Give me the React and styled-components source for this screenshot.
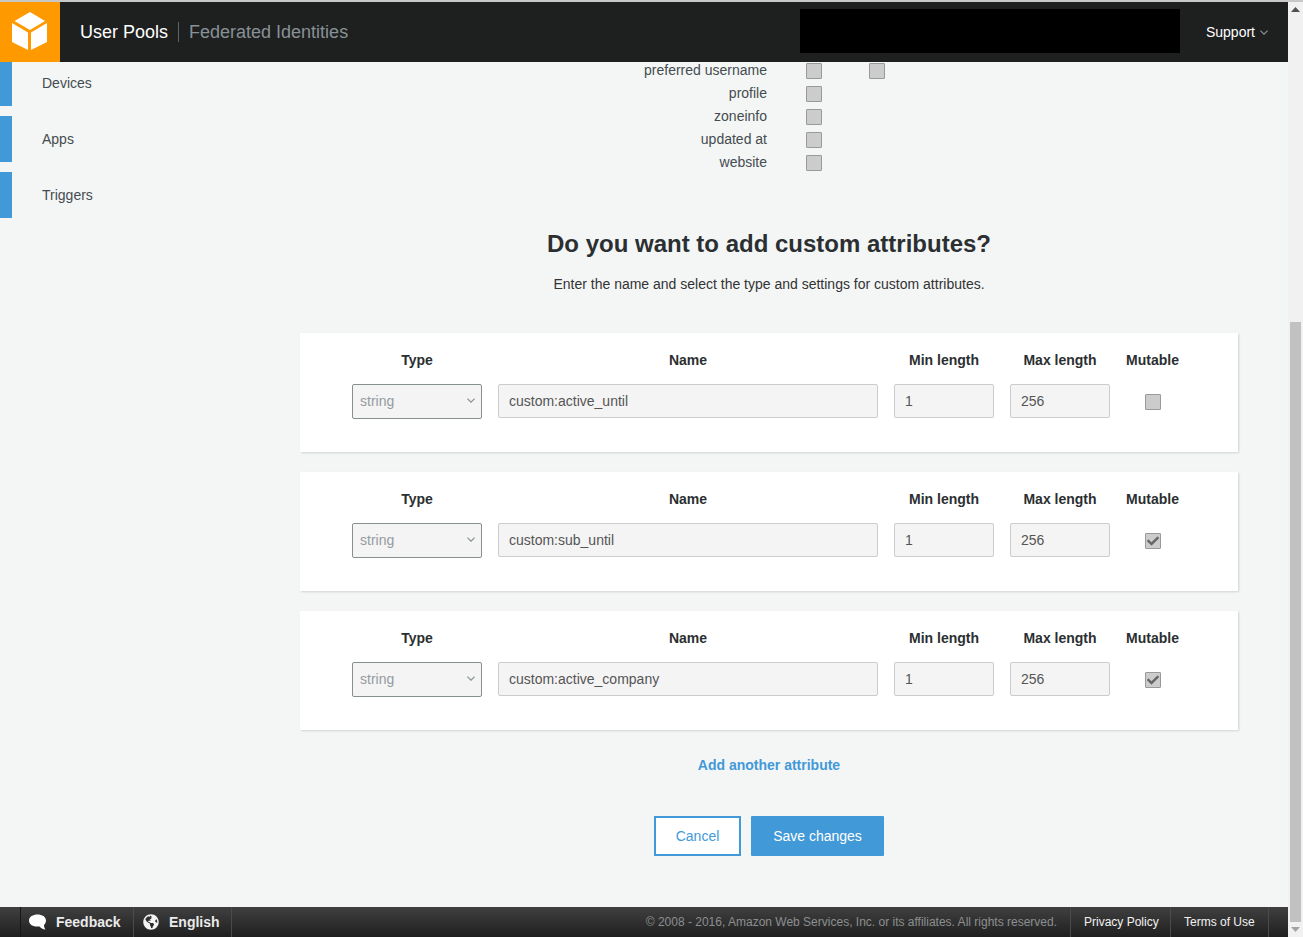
import React from "react";
import styled, { createGlobalStyle } from "styled-components";
import { FaCheck, FaGlobeAmericas } from "react-icons/fa";

const Global = createGlobalStyle`
  html, body { margin: 0; padding: 0; height: 100%; overflow: hidden; }
  body { font-family: "Liberation Sans", Arial, sans-serif; font-size: 14px; color: #333; background: #f4f6f6; }
  * { box-sizing: border-box; }
`;

const Page = styled.div`
  width: 1303px; height: 937px; display: flex; flex-direction: column;
  border-top: 2px solid #c8c8c8; background: #f4f6f6;
`;
const Body = styled.div`display: flex; height: 935px;`;
const Viewport = styled.div`width: 1288px; display: flex; flex-direction: column;`;

const Nav = styled.header`height: 60px; flex: none; background: #1e2020; display: flex; align-items: center;`;
const LogoBox = styled.div`width: 60px; height: 60px; background: #ff9900; display: flex; align-items: center; justify-content: center; margin-right: 20px; padding: 0 1px 2px 0;`;
const NavTab = styled.span`font-size: 18px; color: ${p => p.$dim ? "#879196" : "#fff"};`;
const NavDivider = styled.span`width: 1px; height: 20px; background: #5f6363; margin: 0 10px;`;
const Redacted = styled.div`width: 380px; height: 44px; background: #000; margin: 0 26px 2px auto;`;
const Support = styled.div`color: #fff; font-size: 14px; display: flex; align-items: center; gap: 5px; margin-right: 20px;`;

const Content = styled.div`flex: 1; min-height: 0; display: flex; overflow: hidden;`;
const Sidebar = styled.nav`width: 300px; flex: none; display: flex; flex-direction: column; gap: 10px; margin-top: -2px;`;
const SideItem = styled.div`height: 46px; flex: none; border-left: 12px solid #4299d8; padding-left: 30px; display: flex; align-items: center; color: #444c50; font-size: 14px;`;

const Main = styled.main`width: 938px; flex: none; display: flex; flex-direction: column; align-items: stretch;`;
const AttrList = styled.div`display: flex; flex-direction: column; margin-top: -3px;`;
const AttrRow = styled.div`height: 23px; display: flex; align-items: center;`;
const AttrLabel = styled.span`width: 467px; text-align: right; color: #444c50; font-size: 14px; margin: 0 39px 1px 0;`;
const Check = styled.span`
  width: 16px; height: 16px; flex: none; background: #cccccc; border: 1px solid #999; border-radius: 1px;
  display: inline-flex; align-items: center; justify-content: center;
  margin-right: ${p => p.$gap || 0}px;
  color: #666;
`;
const Title = styled.h2`margin: 56px 0 0; height: 28px; line-height: 28px; text-align: center; font-size: 24px; font-weight: 700; color: #2b2f31;`;
const Subtitle = styled.p`margin: 18px 0 0; height: 16px; line-height: 16px; text-align: center; color: #333; font-size: 14px;`;
const Cards = styled.div`margin-top: 41px; display: flex; flex-direction: column; gap: 20px;`;
const Card = styled.section`
  height: 119px; background: #fff; box-shadow: 1px 1px 2px rgba(0,0,0,.15);
  padding: 19px 0 0 52px;
  display: grid; grid-template-columns: 130px 380px 100px 100px 54px; column-gap: 16px;
  grid-template-rows: 16px 35px; row-gap: 16px; align-content: start; align-items: start;
`;
const ColHead = styled.div`font-weight: 700; font-size: 14px; line-height: 16px; text-align: center; color: #2b2f31; white-space: nowrap; padding-right: ${p => p.$nudge || 0}px;`;
const SelectBox = styled.div`
  height: 35px; background: #f4f4f4; border: 1px solid #888f90; border-radius: 2px; padding: 0 6px 2px 7px;
  display: flex; align-items: center; justify-content: space-between; color: #949b9f; font-size: 14px;
`;
const Field = styled.div`
  height: 34px; background: #f4f4f4; border: 1px solid #ccc; border-radius: 2px;
  padding-left: ${p => p.$pad || 10}px; display: flex; align-items: center; color: #555; font-size: 14px;
`;
const CheckCell = styled.div`height: 35px; display: flex; align-items: center; justify-content: center;`;
const AddLink = styled.a`margin-top: 27px; height: 16px; line-height: 16px; text-align: center; color: #4299d8; font-weight: 700; font-size: 14px;`;
const Actions = styled.div`margin-top: 43px; display: flex; justify-content: center; gap: 10px;`;
const CancelBtn = styled.button`width: 87px; height: 40px; background: #fff; border: 2px solid #4299d8; color: #4299d8; font: 14px "Liberation Sans", Arial, sans-serif; padding: 0;`;
const SaveBtn = styled.button`width: 133px; height: 40px; background: #4299d8; border: 0; border-radius: 1px; color: #fff; font: 14px "Liberation Sans", Arial, sans-serif; padding: 0;`;

const Footer = styled.footer`
  height: 30px; flex: none; background: linear-gradient(#404040, #1f1f1f); display: flex; align-items: center; padding-left: 20px; color: #fff;
`;
const FootItem = styled.div`
  height: 30px; display: flex; align-items: center; border-left: 1px solid ${p => p.$lit ? "#4a4a4a" : "#161616"};
  width: ${p => p.$w}px; padding-left: ${p => p.$pl}px; gap: ${p => p.$gap || 0}px;
  font-size: ${p => p.$small ? 12 : 14}px; font-weight: ${p => p.$small ? 400 : 700}; color: ${p => p.$small ? "#f2f2f2" : "#eaeaea"};
  flex: none; white-space: nowrap;
`;
const Copyright = styled.div`margin-left: auto; margin-right: 13px; color: #8b8f90; font-size: 12px; white-space: nowrap;`;

const Scrollbar = styled.div`width: 15px; flex: none; background: #f1f1f1; display: flex; flex-direction: column; align-items: center;`;
const ScrollBtn = styled.div`height: 15px; width: 15px; flex: none; display: flex; align-items: center; justify-content: center;`;
const ScrollGap = styled.div`height: 305px; flex: none;`;
const Thumb = styled.div`width: 11px; flex: 1; background: #c1c1c1;`;

const Cube = () => (
  <svg width="35" height="38" viewBox="0 0 35 38" aria-hidden="true">
    <path d="M18 0 L33 9 L18 18 L2.5 9 Z" fill="#fff" />
    <path d="M0 11 L16 20.5 L16 38 L0 30 Z" fill="#fff" />
    <path d="M35 11 L19 20.5 L19 38 L35 30 Z" fill="#fff" />
  </svg>
);
const Chevron = ({ color = "#879196" }) => (
  <svg width="8" height="5" viewBox="0 0 8 5" aria-hidden="true"><path d="M.4 .6 L4 4.2 L7.6 .6" fill="none" stroke={color} strokeWidth="1.2" /></svg>
);
const Bubble = () => (
  <svg width="17" height="16" viewBox="0 0 17 16" aria-hidden="true">
    <path d="M8.5 0.5 C13 0.5 17 2.8 17 6.5 C17 9 15.5 10.5 15 11 C15 13 15.8 14.5 16.5 15.5 C14 15.2 11.5 14 10.5 12.4 C6 13.2 0 11.5 0 6.5 C0 2.8 4 .5 8.5 .5 Z" fill="#fff" />
  </svg>
);

const attrs = [
  ["preferred username", true],
  ["profile"],
  ["zoneinfo"],
  ["updated at"],
  ["website"],
];
const customs = [
  ["custom:active_until", false],
  ["custom:sub_until", true],
  ["custom:active_company", true],
];

export default function App() {
  return (
    <Page>
      <Global />
      <Body>
        <Viewport>
          <Nav>
            <LogoBox><Cube /></LogoBox>
            <NavTab>User Pools</NavTab>
            <NavDivider />
            <NavTab $dim>Federated Identities</NavTab>
            <Redacted />
            <Support>Support <Chevron /></Support>
          </Nav>
          <Content>
            <Sidebar>
              <SideItem>Devices</SideItem>
              <SideItem>Apps</SideItem>
              <SideItem>Triggers</SideItem>
            </Sidebar>
            <Main>
              <AttrList>
                {attrs.map(([name, second]) => (
                  <AttrRow key={name}>
                    <AttrLabel>{name}</AttrLabel>
                    <Check $gap={47} />
                    {second && <Check />}
                  </AttrRow>
                ))}
              </AttrList>
              <Title>Do you want to add custom attributes?</Title>
              <Subtitle>Enter the name and select the type and settings for custom attributes.</Subtitle>
              <Cards>
                {customs.map(([name, mutable]) => (
                  <Card key={name}>
                    <ColHead>Type</ColHead>
                    <ColHead>Name</ColHead>
                    <ColHead>Min length</ColHead>
                    <ColHead>Max length</ColHead>
                    <ColHead $nudge={1}>Mutable</ColHead>
                    <SelectBox>string <Chevron /></SelectBox>
                    <Field>{name}</Field>
                    <Field>1</Field>
                    <Field>256</Field>
                    <CheckCell><Check>{mutable && <FaCheck size={12} />}</Check></CheckCell>
                  </Card>
                ))}
              </Cards>
              <AddLink>Add another attribute</AddLink>
              <Actions>
                <CancelBtn>Cancel</CancelBtn>
                <SaveBtn>Save changes</SaveBtn>
              </Actions>
            </Main>
          </Content>
          <Footer>
            <FootItem $w={113} $pl={8} $gap={10}><Bubble />Feedback</FootItem>
            <FootItem $w={98} $pl={9} $gap={10} $lit><FaGlobeAmericas size={16} color="#f4f4f4" />English</FootItem>
            <FootItem $w={1} $pl={0} $lit />
            <Copyright>© 2008 - 2016, Amazon Web Services, Inc. or its affiliates. All rights reserved.</Copyright>
            <FootItem $w={100} $pl={13} $small $lit>Privacy Policy</FootItem>
            <FootItem $w={98} $pl={13} $small $lit>Terms of Use</FootItem>
            <FootItem $w={20} $pl={0} $lit />
          </Footer>
        </Viewport>
        <Scrollbar>
          <ScrollBtn><svg width="9" height="5" viewBox="0 0 9 5" aria-hidden="true"><path d="M4.5 0 L9 5 H0 Z" fill="#505050" /></svg></ScrollBtn>
          <ScrollGap />
          <Thumb />
          <ScrollBtn><svg width="9" height="5" viewBox="0 0 9 5" aria-hidden="true"><path d="M0 0 H9 L4.5 5 Z" fill="#a3a3a3" /></svg></ScrollBtn>
        </Scrollbar>
      </Body>
    </Page>
  );
}
